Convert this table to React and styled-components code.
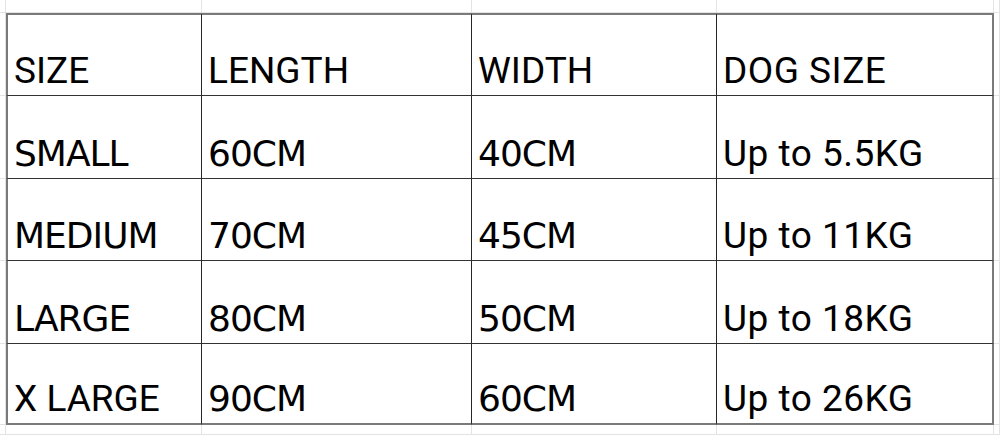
import React from "react";
import styled, { createGlobalStyle } from "styled-components";

const Global = createGlobalStyle`
  html, body { margin: 0; padding: 0; background: #ffffff; }
  body { width: 1000px; height: 435px; overflow: hidden; }
`;

const Sheet = styled.div`
  display: grid;
  grid-template-columns: 6px 196px 270px 245px 277px 1fr;
  grid-template-rows: 13px 83px 83px 82px 83px 81px 1fr;
  width: 1000px;
  height: 435px;
  box-sizing: border-box;
`;

const Margin = styled.div`
  box-sizing: border-box;
  border-right: 1px solid #e3e3e3;
  border-bottom: 1px solid #e3e3e3;
`;

const Cell = styled.div`
  box-sizing: border-box;
  display: flex;
  align-items: flex-end;
  padding: 0 4px 6px 6px;
  border-right: ${(p) => (p.$last ? "2px solid #7a7a7a" : "1px solid #262626")};
  border-bottom: ${(p) => (p.$bottom ? "2px solid #7a7a7a" : "1px solid #333333")};
  border-top: ${(p) => (p.$top ? "2px solid #7a7a7a" : "none")};
  border-left: ${(p) => (p.$first ? "2px solid #7a7a7a" : "none")};
  color: #000;
  white-space: nowrap;
  font-family: ${(p) =>
    p.$face === "tahoma"
      ? '"DejaVu Sans", Verdana, sans-serif'
      : 'Roboto, "Liberation Sans", Arial, sans-serif'};
  font-size: ${(p) => (p.$face === "tahoma" ? "36px" : "37px")};
  letter-spacing: ${(p) =>
    p.$face === "tahoma" ? "-1px" : p.$last ? "0.5px" : "0"};
  line-height: 37px;
`;

const header = ["SIZE", "LENGTH", "WIDTH", "DOG SIZE"];
const rows = [
  ["SMALL", "60CM", "40CM", "Up to 5.5KG"],
  ["MEDIUM", "70CM", "45CM", "Up to 11KG"],
  ["LARGE", "80CM", "50CM", "Up to 18KG"],
  ["X LARGE", "90CM", "60CM", "Up to 26KG"],
];

export default function App() {
  const all = [header, ...rows];
  const out = [];
  for (let c = 0; c < 6; c++) out.push(<Margin key={`t${c}`} />);
  all.forEach((r, ri) => {
    out.push(<Margin key={`l${ri}`} />);
    r.forEach((txt, ci) => {
      let face = "roboto";
      if (ri > 0 && ci < 3 && txt !== "X LARGE") face = "tahoma";
      out.push(
        <Cell
          key={`c${ri}-${ci}`}
          $face={face}
          $top={ri === 0}
          $bottom={ri === all.length - 1}
          $first={ci === 0}
          $last={ci === 3}
        >
          {txt}
        </Cell>
      );
    });
    out.push(<Margin key={`r${ri}`} />);
  });
  for (let c = 0; c < 6; c++) out.push(<Margin key={`b${c}`} />);
  return (
    <>
      <Global />
      <Sheet>{out}</Sheet>
    </>
  );
}
